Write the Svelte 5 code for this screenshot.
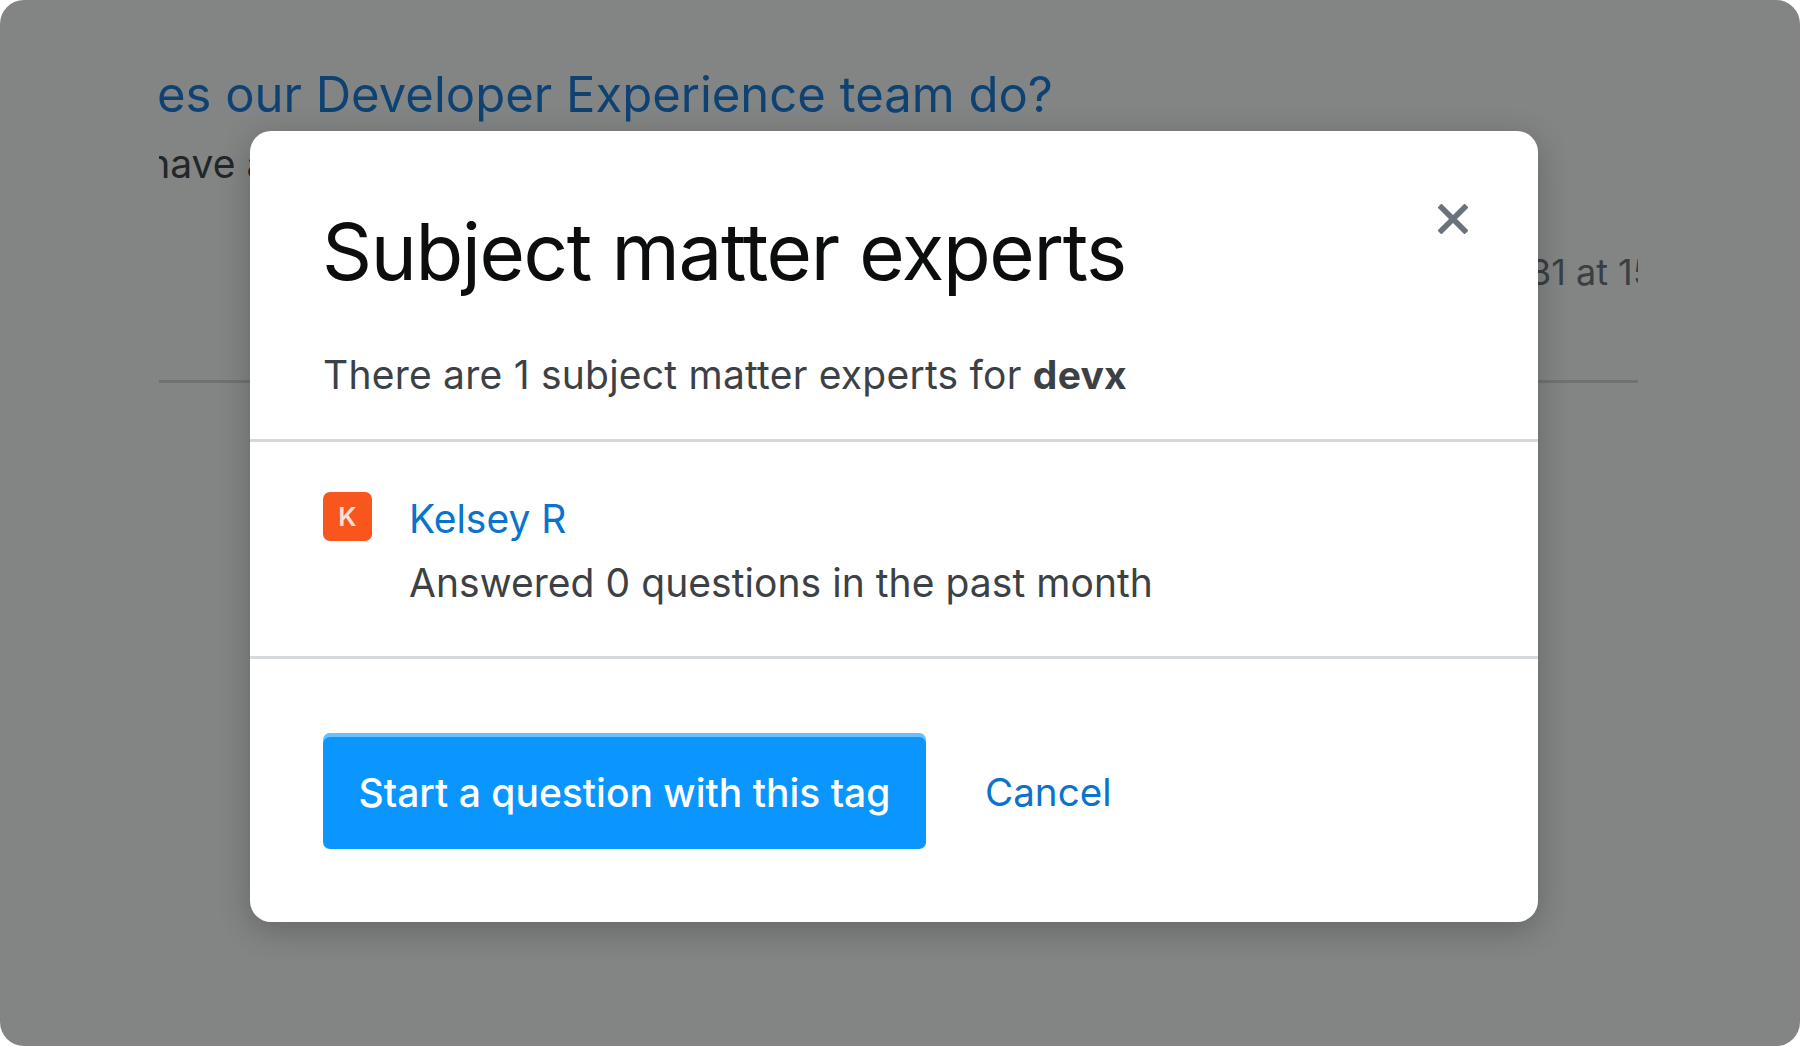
<script lang="ts">
  const expert = { name: "Kelsey R", initial: "K", answered: 0 };
</script>

<div class="page">
  <div class="content">
    <h1 class="question">What does our Developer Experience team do?</h1>
    <p class="excerpt">We have a lot of teams</p>
    <p class="meta">asked Mar 31 at 15:04</p>
    <hr class="rule" />
  </div>
  <div class="scrim"></div>
  <div class="modal">
    <button class="close" aria-label="Close">
      <svg width="30" height="30" viewBox="0 0 30 30">
        <path d="M1.5 1.5 L28.5 28.5 M28.5 1.5 L1.5 28.5" fill="none" stroke="#6a737c" stroke-width="5.6" />
      </svg>
    </button>
    <header class="head">
      <h2>Subject matter experts</h2>
      <p>There are 1 subject matter experts for <strong>devx</strong></p>
    </header>
    <div class="person">
      <div class="avatar">{expert.initial}</div>
      <div class="info">
        <a href="#kelsey">{expert.name}</a>
        <p>Answered {expert.answered} questions in the past month</p>
      </div>
    </div>
    <footer class="actions">
      <button class="primary">Start a question with this tag</button>
      <a class="cancel" href="#cancel">Cancel</a>
    </footer>
  </div>
</div>

<style>
  :global(body) {
    margin: 0;
    background: #fff;
  }

  .page {
    position: relative;
    width: 1800px;
    height: 1046px;
    border-radius: 24px;
    overflow: hidden;
    background: #fff;
    font-family: Inter, "Liberation Sans", sans-serif;
  }

  .content {
    margin: 0 162px 0 159px;
    padding-top: 65px;
    overflow: hidden;
  }

  .question {
    margin: 0 0 0 -196px;
    font-size: 49px;
    line-height: 60px;
    font-weight: 400;
    white-space: nowrap;
    color: #1279dc;
  }

  .excerpt {
    margin: 14px 0 0 -82px;
    font-size: 39px;
    line-height: 50px;
    white-space: nowrap;
    color: #3c4146;
  }

  .meta {
    margin: 58px -73px 0 0;
    font-size: 36px;
    line-height: 50px;
    text-align: right;
    white-space: nowrap;
    color: #6a737c;
  }

  .rule {
    margin: 83px 0 0;
    border: 0;
    border-top: 3px solid #d6d9dc;
  }

  .scrim {
    position: absolute;
    inset: 0;
    background: rgba(7, 11, 9, 0.5);
  }

  .modal {
    position: absolute;
    left: 250px;
    top: 131px;
    width: 1288px;
    height: 791px;
    display: flex;
    flex-direction: column;
    border-radius: 21px;
    background: #fff;
    box-shadow: 0 8px 32px rgba(0, 0, 0, 0.24);
  }

  .close {
    position: absolute;
    top: 73px;
    right: 70px;
    width: 30px;
    height: 30px;
    padding: 0;
    border: 0;
    background: none;
    line-height: 0;
  }

  .head {
    height: 311px;
    box-sizing: border-box;
    padding: 75px 73px 0;
    border-bottom: 3px solid #d6d9dc;
  }

  h2 {
    margin: 0 0 0 -1px;
    font-size: 78px;
    line-height: 92px;
    font-weight: 400;
    letter-spacing: -1.35px;
    color: #0c0d0e;
  }

  .head p {
    margin: 52px 0 0;
    font-size: 39px;
    line-height: 50px;
    letter-spacing: 0.23px;
    color: #3c4146;
  }

  .head strong {
    font-weight: 700;
  }

  .person {
    height: 217px;
    box-sizing: border-box;
    display: flex;
    gap: 37px;
    padding: 50px 73px 0;
    border-bottom: 3px solid #d6d9dc;
  }

  .avatar {
    width: 49px;
    height: 49px;
    display: flex;
    align-items: center;
    justify-content: center;
    border-radius: 7px;
    background: #f8561c;
    color: #fde0d5;
    font-size: 26px;
    font-weight: 600;
  }

  .info {
    padding-top: 1px;
  }

  .info a {
    display: block;
    font-size: 39px;
    line-height: 52px;
    color: #0a74cc;
    text-decoration: none;
  }

  .info p {
    margin: 12px 0 0;
    font-size: 39px;
    line-height: 52px;
    letter-spacing: 0.05px;
    color: #3c4146;
  }

  .actions {
    display: flex;
    align-items: center;
    gap: 59px;
    padding: 74px 73px 0;
  }

  .primary {
    width: 603px;
    height: 116px;
    padding: 2px 0 0;
    border: 0;
    border-radius: 7px;
    background: #0a95ff;
    box-shadow: inset 0 4px 0 rgba(255, 255, 255, 0.4);
    color: #fff;
    font: inherit;
    font-size: 39px;
    font-weight: 450;
  }

  .cancel {
    margin-top: 2px;
    font-size: 38.6px;
    font-weight: 400;
    color: #0a74cc;
    text-decoration: none;
  }
</style>
